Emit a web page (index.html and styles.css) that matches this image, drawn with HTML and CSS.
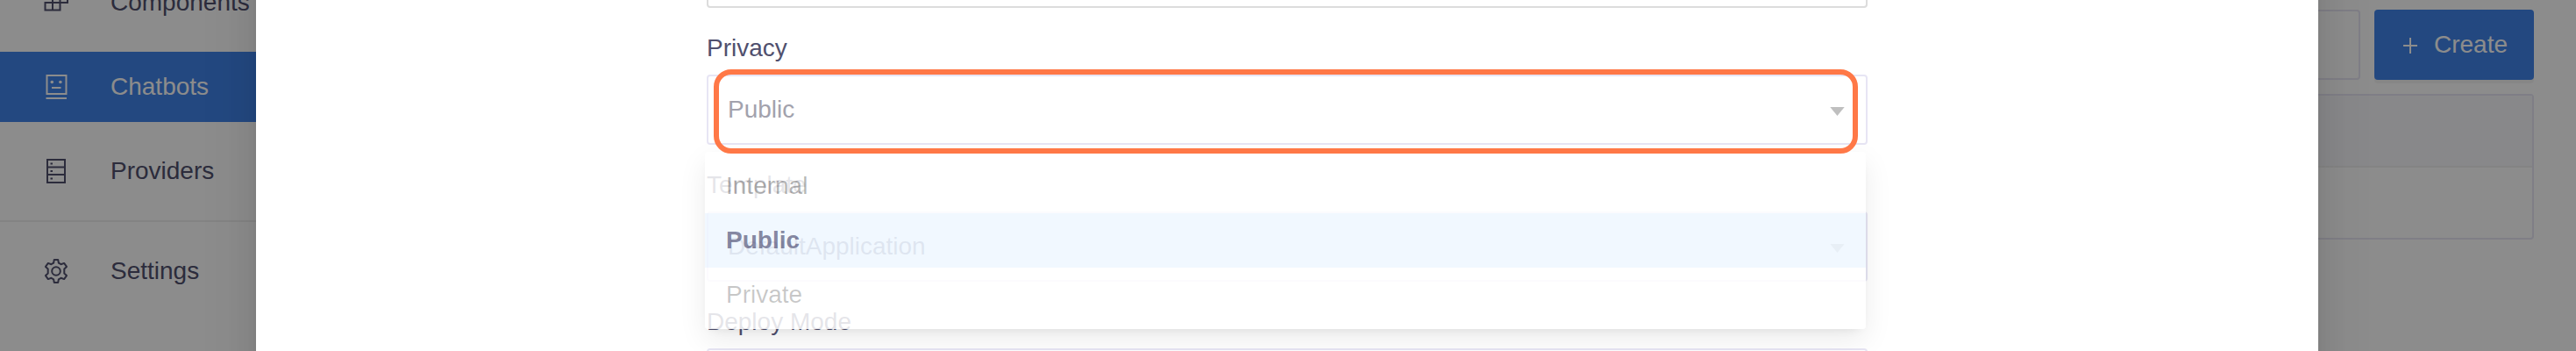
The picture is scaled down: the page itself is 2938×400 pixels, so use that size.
FILE: index.html
```html
<!DOCTYPE html>
<html lang="en">
<head>
<meta charset="utf-8">
<title>Chatbots</title>
<link rel="stylesheet" href="styles.css">
</head>
<body>
<div class="app">
  <nav class="sidebar">
    <a class="nav-item"><svg class="nav-icon" viewBox="0 0 28 28"><path d="M1.500 14V22.500H18.500V14zM10 5V22.500M18.500 5V14M18.500 14H27V5H10"/></svg>Components</a>
    <a class="nav-item active"><svg class="nav-icon" viewBox="0 0 28 28"><path d="M3.500 1h22v21H3.500zM2.500 27H26M9 15H19.500"/><circle cx="9.300" cy="8.500" r="1.800"/><circle cx="18.900" cy="8.500" r="1.800"/></svg>Chatbots</a>
    <a class="nav-item"><svg class="nav-icon" viewBox="0 0 28 28"><path d="M4 1h20v26H4zM4 9.500H24M4 18H24"/><path d="M7.500 5.500h2.500M7.500 14h2.500M7.500 22.500h2.500"/></svg>Providers</a>
    <hr class="rule">
    <a class="nav-item"><svg class="nav-icon" viewBox="0 0 28 28"><path stroke-linejoin="round" d="M11.800 1h4.400l.7 3.700 2.600 1.500 3.600-1.300 2.900 4-2.700 2.500v5.200l2.700 2.500-2.900 4-3.600-1.300-2.600 1.500-.7 3.700h-4.400l-.7-3.700-2.600-1.500-3.600 1.300-2.900-4 2.700-2.500v-5.200L2 8.900l2.900-4 3.600 1.300 2.600-1.500z"/><circle class="hollow" cx="14" cy="14" r="4.800"/></svg>Settings</a>
  </nav>
  <main class="content">
    <div class="toolbar">
      <div class="search"></div>
      <button class="create"><svg class="plus" viewBox="0 0 18 18"><path d="M1 9H17M9 0V18"/></svg>Create</button>
    </div>
    <div class="table"><div class="table-head"></div><div class="table-row"></div></div>
  </main>
</div>
<div class="mask">
  <section class="modal">
    <form class="form">
      <div class="field plain"></div>
      <label class="label">Privacy</label>
      <div class="field"><span>Public</span><svg class="caret" viewBox="0 0 18 11"><path d="M0 0h18L9 11z"/></svg></div>
      <label class="label">Template</label>
      <div class="field template"><span>DefaultApplication</span><svg class="caret" viewBox="0 0 18 11"><path d="M0 0h18L9 11z"/></svg></div>
      <label class="label">Deploy Mode</label>
      <div class="field"></div>
    </form>
    <div class="dropdown">
      <div class="option">Internal</div>
      <div class="option selected">Public</div>
      <div class="option leaving">Private</div>
    </div>
    <div class="highlight"></div>
  </section>
</div>
</body>
</html>
```
FILE: styles.css
```css
* { box-sizing: border-box; }
body {
  margin: 0;
  height: 400px;
  overflow: hidden;
  position: relative;
  background: #fff;
  color: #50506e;
  font: 28px/32px "Liberation Sans", Arial, sans-serif;
}
.app { display: flex; height: 400px; overflow: hidden; }
.sidebar { width: 400px; margin-top: -37px; flex: none; }
.nav-item {
  display: flex;
  align-items: center;
  height: 80px;
  margin-bottom: 16px;
  padding-left: 50px;
  gap: 48px;
}
.nav-item.active { background: #4183e9; color: #fff; }
.nav-icon { width: 28px; height: 28px; fill: none; stroke: currentColor; stroke-width: 2; }
.nav-icon circle { fill: currentColor; stroke: none; }
.nav-icon .hollow { fill: none; stroke: currentColor; }
.rule { height: 2px; margin: 0 0 16px; border: 0; background: #efefef; }
.content { flex: 1; padding: 11px 48px 0 60px; }
.toolbar { display: flex; gap: 16px; margin-bottom: 16px; }
.search { flex: 1; height: 80px; border: 2px solid #e7e5f4; border-radius: 4px; }
.create {
  display: flex;
  align-items: center;
  gap: 18px;
  width: 182px;
  height: 80px;
  padding: 0 0 0 32px;
  border: 0;
  border-radius: 4px;
  background: #4183e9;
  box-shadow: 0 4px 0 rgba(0, 0, 0, .04);
  color: #fff;
  font: inherit;
}
.plus { width: 18px; height: 18px; margin-top: 2px; fill: none; stroke: currentColor; stroke-width: 2; }
.table { height: 166px; border: 2px solid #e7e5f4; border-radius: 4px; }
.table-head { height: 82px; background: #f7f7fb; border-bottom: 2px solid #f0f0f0; }
.mask { position: absolute; inset: 0; overflow: hidden; background: rgba(0, 0, 0, .45); }
.modal {
  position: relative;
  width: 2352px;
  height: 600px;
  margin: -100px 0 0 292px;
  padding: 29px 514px 0;
  background: #fff;
  box-shadow: 0 12px 32px rgba(0, 0, 0, .08), 0 6px 12px -8px rgba(0, 0, 0, .12), 0 18px 56px 16px rgba(0, 0, 0, .05);
}
.field {
  display: flex;
  align-items: center;
  justify-content: space-between;
  height: 80px;
  padding: 0 24px 0 22px;
  border: 2px solid #e7e5f4;
  border-radius: 4px;
  color: #a2a2ad;
}
.field.plain { border-color: #dcdcdc; }
.field.template { color: #7c7c95; }
.label { display: block; height: 76px; padding-top: 30px; }
.caret { width: 17px; height: 10px; margin-top: 4px; fill: #bfbfbf; }
.dropdown {
  position: absolute;
  left: 512px;
  top: 273px;
  width: 1324px;
  padding: 8px 0;
  border-radius: 4px;
  background: rgba(255, 255, 255, .85);
  box-shadow: 0 12px 32px rgba(0, 0, 0, .08), 0 6px 12px -8px rgba(0, 0, 0, .12);
}
.option { height: 62px; padding: 15px 24px; color: rgba(0, 0, 0, .29); }
.option.selected { background: rgba(100, 178, 255, .09); color: rgba(60, 60, 100, .62); font-weight: bold; }
.option.leaving { color: rgba(0, 0, 0, .22); }
.highlight {
  position: absolute;
  left: 522px;
  top: 179px;
  width: 1305px;
  height: 96px;
  border: 6px solid #ff7847;
  border-radius: 20px;
}
```
